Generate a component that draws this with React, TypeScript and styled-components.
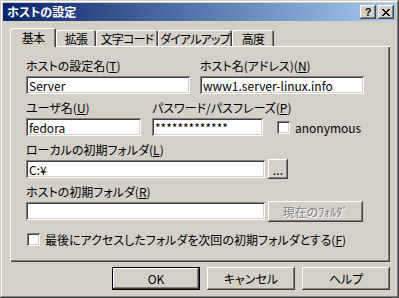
import React from 'react';
import styled, { createGlobalStyle } from 'styled-components';

const GlobalStyle = createGlobalStyle`
  html, body {
    margin: 0;
    padding: 0;
    background: #d4d0c8;
  }
`;

const raised = `
  box-shadow: inset -1px -1px #404040, inset 1px 1px #ffffff,
    inset -2px -2px #808080, inset 2px 2px #d4d0c8;
`;

const sunken = `
  box-shadow: inset 1px 1px #808080, inset -1px -1px #ffffff,
    inset 2px 2px #404040, inset -2px -2px #d4d0c8;
`;

const Window = styled.div`
  width: 399px;
  height: 298px;
  box-sizing: border-box;
  padding: 3px;
  display: flex;
  flex-direction: column;
  background: #d4d0c8;
  box-shadow: inset -1px -1px #404040, inset 1px 1px #d4d0c8,
    inset -2px -2px #808080, inset 2px 2px #ffffff;
  font-family: "Noto Sans CJK JP", sans-serif;
  font-size: 12px;
  font-feature-settings: "palt";
  color: #000;
`;

const TitleBar = styled.div`
  height: 18px;
  display: flex;
  align-items: center;
  padding: 0 2px;
  background: linear-gradient(to right, #0a246a, #a6caf0);
`;

const TitleText = styled.div`
  flex: 1;
  margin-left: 2px;
  color: #fff;
  font-weight: bold;
  line-height: 18px;
`;

const CaptionButton = styled.div`
  width: 16px;
  height: 14px;
  margin-left: 2px;
  box-sizing: border-box;
  display: flex;
  align-items: center;
  justify-content: center;
  background: #d4d0c8;
  ${raised}
  font-family: "Liberation Sans", sans-serif;
  font-weight: bold;
  font-size: 11px;
  line-height: 14px;
`;

const Body = styled.div`
  flex: 1;
  display: flex;
  flex-direction: column;
  padding: 7px 6px 0 7px;
`;

const TabStrip = styled.div`
  height: 18px;
  display: flex;
  align-items: flex-end;
`;

const Tab = styled.div<{ $active?: boolean; $w: number }>`
  position: relative;
  z-index: ${p => (p.$active ? 2 : 0)};
  width: ${p => p.$w}px;
  height: ${p => (p.$active ? 19 : 16)}px;
  margin-bottom: ${p => (p.$active ? -1 : 0)}px;
  box-sizing: border-box;
  display: flex;
  align-items: center;
  justify-content: center;
  background: #d4d0c8;
  border-radius: 2px 2px 0 0;
  box-shadow: inset 1px 1px #ffffff, inset -1px 0 #404040, inset -2px 0 #808080;
  white-space: nowrap;
  font-size: 12px;
  letter-spacing: -0.8px;
`;

const Panel = styled.div`
  position: relative;
  z-index: 1;
  height: 216px;
  box-sizing: border-box;
  padding: 12px 0 0 16px;
  box-shadow: inset 1px 1px #ffffff, inset -1px -1px #404040,
    inset -2px -2px #808080;
  display: flex;
  flex-direction: column;
`;

const Row = styled.div<{ $gap: number }>`
  display: flex;
  gap: ${p => p.$gap}px;
  margin-bottom: 6px;
`;

const Field = styled.div`
  display: flex;
  flex-direction: column;
`;

const Label = styled.div`
  height: 16px;
  line-height: 16px;
  margin-bottom: 2px;
  white-space: nowrap;
`;

const InputLine = styled.div`
  height: 18px;
  display: flex;
  align-items: center;
  gap: 3px;
`;

const TextBox = styled.input<{ $w: number }>`
  width: ${p => p.$w}px;
  height: 18px;
  box-sizing: border-box;
  border: none;
  outline: none;
  margin: 0;
  padding: 0 3px;
  background: #fff;
  ${sunken}
  font: inherit;
  color: #000;
`;

const Button = styled.div<{ $w: number; $h: number; $disabled?: boolean; $default?: boolean }>`
  width: ${p => p.$w}px;
  height: ${p => p.$h}px;
  flex-shrink: 0;
  box-sizing: border-box;
  display: flex;
  align-items: center;
  justify-content: center;
  background: #d4d0c8;
  ${p =>
    p.$default
      ? `box-shadow: inset 0 0 0 1px #000000, inset -2px -2px #404040, inset 2px 2px #ffffff, inset -3px -3px #808080;`
      : raised}
  color: ${p => (p.$disabled ? '#808080' : '#000')};
  text-shadow: ${p => (p.$disabled ? '1px 1px #ffffff' : 'none')};
  white-space: nowrap;
`;

const Check = styled.div`
  width: 13px;
  height: 13px;
  flex-shrink: 0;
  box-sizing: border-box;
  background: #fff;
  ${sunken}
`;

const CheckWrap = styled.div`
  display: flex;
  align-items: center;
  gap: 5px;
  margin-left: 11px;
`;

const LastRow = styled.div`
  display: flex;
  align-items: center;
  gap: 5px;
  height: 13px;
  margin-top: 7px;
  margin-left: 1px;
`;

const ButtonRow = styled.div`
  display: flex;
  justify-content: flex-end;
  gap: 7px;
  margin-top: 5px;
`;

const CloseIcon = () => (
  <svg width="8" height="7" viewBox="0 0 8 7" shapeRendering="crispEdges">
    <path d="M0 0h2v1h1v1h2V1h1V0h2v1H7v1H6v1H5v1h1v1h1v1h1v1H6V6H5V5H3v1H2v1H0V6h1V5h1V4h1V3H2V2H1V1H0z" fill="#000" />
  </svg>
);

const tabs = [
  { label: '基本', w: 46 },
  { label: '拡張', w: 40 },
  { label: '文字コード', w: 62 },
  { label: 'ダイアルアップ', w: 74 },
  { label: '高度', w: 42 },
];

export default function App() {
  return (
    <>
      <GlobalStyle />
      <Window>
        <TitleBar>
          <TitleText>ホストの設定</TitleText>
          <CaptionButton>?</CaptionButton>
          <CaptionButton>
            <CloseIcon />
          </CaptionButton>
        </TitleBar>
        <Body>
          <TabStrip>
            {tabs.map((t, i) => (
              <Tab key={t.label} $w={t.w} $active={i === 0}>
                {t.label}
              </Tab>
            ))}
          </TabStrip>
          <Panel>
            <Row $gap={10}>
              <Field>
                <Label>ホストの設定名(<u>T</u>)</Label>
                <TextBox $w={164} defaultValue="Server" readOnly />
              </Field>
              <Field>
                <Label>ホスト名(アドレス)(<u>N</u>)</Label>
                <TextBox $w={164} defaultValue="www1.server-linux.info" readOnly />
              </Field>
            </Row>
            <Row $gap={11}>
              <Field>
                <Label>ユーザ名(<u>U</u>)</Label>
                <TextBox $w={115} defaultValue="fedora" readOnly />
              </Field>
              <Field>
                <Label>パスワード/パスフレーズ(<u>P</u>)</Label>
                <InputLine>
                  <TextBox $w={111} defaultValue="*************" readOnly />
                  <CheckWrap>
                    <Check />
                    <span>anonymous</span>
                  </CheckWrap>
                </InputLine>
              </Field>
            </Row>
            <Row $gap={0}>
              <Field>
                <Label>ローカルの初期フォルダ(<u>L</u>)</Label>
                <InputLine>
                  <TextBox $w={239} defaultValue="C:¥" readOnly />
                  <Button $w={20} $h={20}>...</Button>
                </InputLine>
              </Field>
            </Row>
            <Row $gap={0}>
              <Field>
                <Label>ホストの初期フォルダ(<u>R</u>)</Label>
                <InputLine>
                  <TextBox $w={239} defaultValue="" readOnly />
                  <Button $w={95} $h={21} $disabled>
                    現在のﾌｫﾙﾀﾞ
                  </Button>
                </InputLine>
              </Field>
            </Row>
            <LastRow>
              <Check />
              <span>最後にアクセスしたフォルダを次回の初期フォルダとする(<u>F</u>)</span>
            </LastRow>
          </Panel>
          <ButtonRow>
            <Button $w={88} $h={23} $default>OK</Button>
            <Button $w={88} $h={23}>キャンセル</Button>
            <Button $w={88} $h={23}>ヘルプ</Button>
          </ButtonRow>
        </Body>
      </Window>
    </>
  );
}
